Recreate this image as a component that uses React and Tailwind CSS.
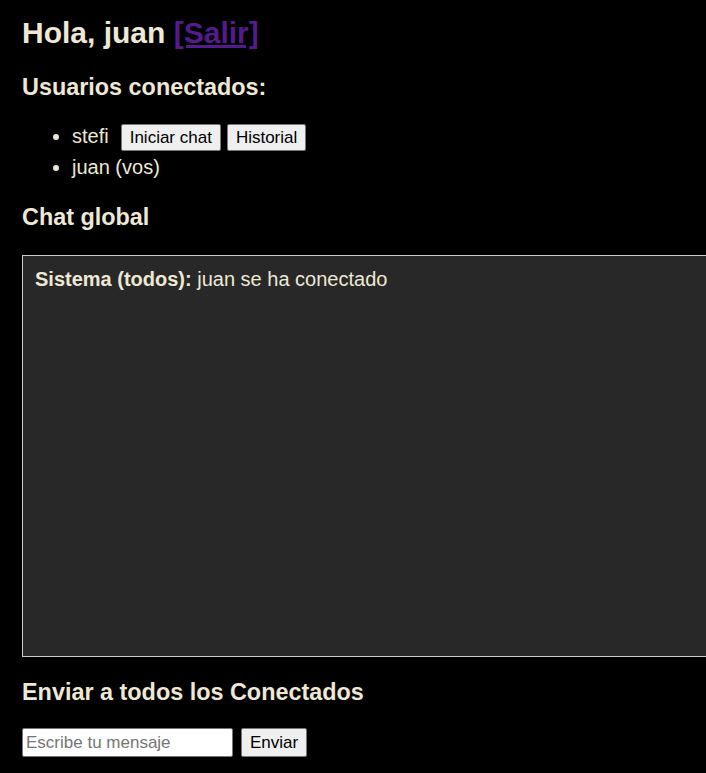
export default function App() {
  return (
    <div className="h-[773px] w-full overflow-hidden bg-black pl-[22px] pt-[16px] font-['Liberation_Sans',Arial,sans-serif] text-[#eee8d5]">
      <h1 className="m-0 text-[30px] font-bold leading-[34px]">
        Hola, juan{" "}
        <a href="#" className="text-[#551a8b] underline">[Salir]</a>
      </h1>
      <h2 className="mt-[24px] text-[23.4px] font-bold leading-[27px]">Usuarios conectados:</h2>
      <ul className="mt-[23px] list-disc pl-[50px] text-[20px] leading-[23px]">
        <li>
          stefi
          <button className="ml-[12px] inline-block rounded-[2px] border border-[#767676] bg-[#efefef] px-[8px] py-[3px] text-[17px] leading-[19px] text-black">
            Iniciar chat
          </button>
          <button className="ml-[6px] inline-block rounded-[2px] border border-[#767676] bg-[#efefef] px-[8px] py-[3px] text-[17px] leading-[19px] text-black">
            Historial
          </button>
        </li>
        <li className="mt-[5px]">juan (vos)</li>
      </ul>
      <h2 className="mt-[25px] text-[23.4px] font-bold leading-[27px]">Chat global</h2>
      <div className="mt-[24px] h-[402px] w-[720px] border border-[#cccccc] bg-[#282828] p-[12px] text-[20px] leading-[23px]">
        <div>
          <span className="font-bold">Sistema (todos):</span> juan se ha conectado
        </div>
      </div>
      <h2 className="mt-[22px] text-[23.4px] font-bold leading-[27px]">Enviar a todos los Conectados</h2>
      <div className="mt-[22px] flex items-stretch">
        <input
          type="text"
          placeholder="Escribe tu mensaje"
          className="h-[29px] w-[211px] rounded-[2px] border border-[#767676] bg-white px-[3px] text-[17px] text-black placeholder:text-[#757575] outline-none"
        />
        <button className="ml-[8px] h-[29px] rounded-[2px] border border-[#767676] bg-[#efefef] px-[8px] text-[17px] leading-[19px] text-black">
          Enviar
        </button>
      </div>
    </div>
  );
}
